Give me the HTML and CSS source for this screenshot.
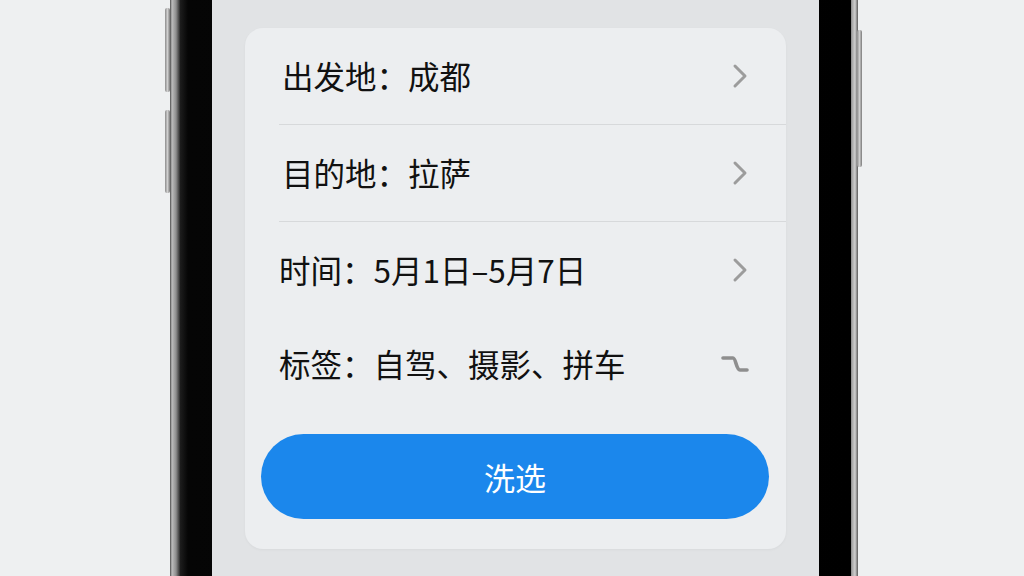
FILE: index.html
```html
<!DOCTYPE html>
<html lang="zh-CN">
<head>
    <meta charset="UTF-8">
    <meta name="viewport" content="width=device-width, initial-scale=1.0">
    <title>筛选</title>
    <link rel="stylesheet" href="styles.css">
</head>
<body>
    <div class="phone">
        <span class="side-btn left-top"></span>
        <span class="side-btn left-bottom"></span>
        <span class="side-btn right"></span>
        <div class="bezel">
            <div class="screen">
                <div class="card">
                    <div class="row">
                        <span class="label">出发地：成都</span>
                        <svg class="chevron" width="16" height="26" viewBox="0 0 16 26"><path d="M3 3 L13 13 L3 23" /></svg>
                    </div>
                    <div class="row">
                        <span class="label">目的地：拉萨</span>
                        <svg class="chevron" width="16" height="26" viewBox="0 0 16 26"><path d="M3 3 L13 13 L3 23" /></svg>
                    </div>
                    <div class="row row-plain">
                        <span class="label">时间：5月1日–5月7日</span>
                        <svg class="chevron" width="16" height="26" viewBox="0 0 16 26"><path d="M3 3 L13 13 L3 23" /></svg>
                    </div>
                    <div class="row row-plain row-last">
                        <span class="label">标签：自驾、摄影、拼车</span>
                        <svg class="toggle" width="30" height="20" viewBox="0 0 30 20"><path d="M3 4 H13 C16 4 16 16 20 16 H27" /></svg>
                    </div>
                    <button class="submit">洗选</button>
                </div>
            </div>
        </div>
    </div>
</body>
</html>
```

FILE: styles.css
```css
body {
    margin: 0;
    height: 576px;
    overflow: hidden;
    background-color: #eef0f1;
    font-family: "Noto Sans CJK SC", "Noto Sans", sans-serif;
}
.phone {
    position: relative;
    width: 688px;
    height: 576px;
    margin-left: 170px;
    box-sizing: border-box;
    padding: 0 7px 0 10px;
    background: linear-gradient(to right, #4a4a4a 0, #bdbdbd 2px, #8e8e8e 6px, #2a2a2a 10px, #2a2a2a 678px, #a5a5a5 682px, #cfcfcf 685px, #5a5a5a 688px);
}
.side-btn {
    position: absolute;
    width: 5px;
    background: linear-gradient(to right, #8c8c8c, #cfcfcf, #7a7a7a);
    border-radius: 2px;
}
.left-top {
    left: -5px;
    top: 8px;
    height: 84px;
}
.left-bottom {
    left: -5px;
    top: 110px;
    height: 83px;
}
.right {
    right: -4px;
    top: 30px;
    height: 137px;
}
.bezel {
    height: 100%;
    padding: 0 32px;
    background: linear-gradient(to right, #1e1e1e 0, #050505 8px, #000 100%);
}
.screen {
    height: 100%;
    box-sizing: border-box;
    padding: 28px 33px;
    background-color: #e1e3e5;
}
.card {
    height: 521px;
    box-sizing: border-box;
    padding-bottom: 30px;
    background-color: #eceef0;
    border-radius: 18px;
    box-shadow: 0 1px 3px rgba(0,0,0,0.04);
    display: flex;
    flex-direction: column;
}
.row {
    height: 97px;
    margin-left: 34px;
    padding-right: 38px;
    box-sizing: border-box;
    display: flex;
    align-items: center;
    justify-content: space-between;
    border-bottom: 1px solid #d7d9db;
}
.row-plain {
    height: 96px;
    border-bottom: none;
}
.row-last {
    height: 92px;
}
.label {
    padding-left: 3px;
    padding-bottom: 2px;
    font-size: 31.5px;
    color: #111;
}
.row-plain .label {
    padding-left: 0;
}
.chevron path, .toggle path {
    fill: none;
    stroke: #9c9c9c;
    stroke-width: 3;
    stroke-linecap: round;
    stroke-linejoin: round;
}
.toggle {
    margin-right: -2px;
}
.toggle path {
    stroke: #8e8e8e;
    stroke-width: 3.6;
}
.submit {
    height: 85px;
    margin: 24px 17px 0 16px;
    border: none;
    border-radius: 43px;
    background-color: #1b87ec;
    color: white;
    font-family: inherit;
    font-size: 31px;
    cursor: pointer;
}
```
